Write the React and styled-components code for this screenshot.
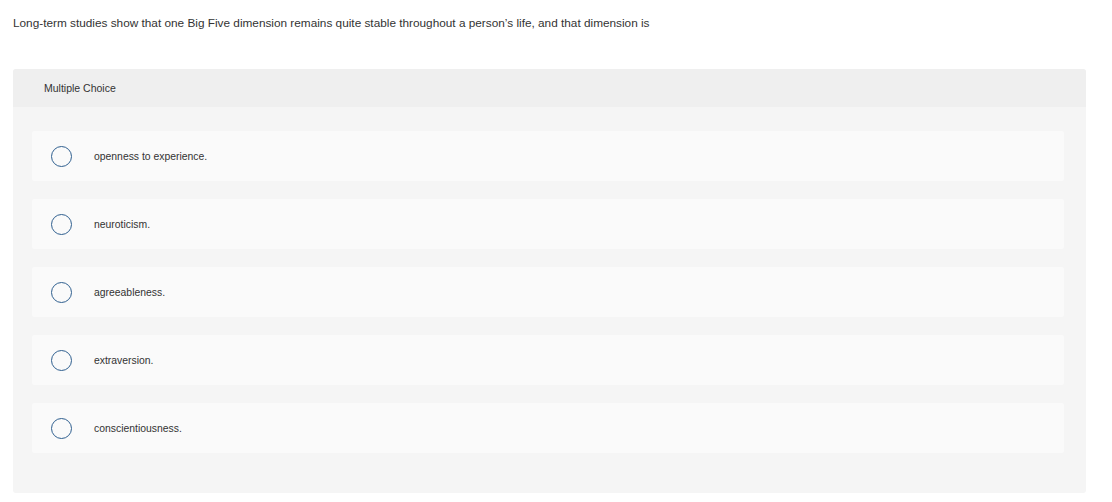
import React from 'react';
import styled, { createGlobalStyle } from 'styled-components';

const GlobalStyle = createGlobalStyle`
  body {
    margin: 0;
    background: #fff;
    font-family: "Liberation Sans", Arial, sans-serif;
    color: #333;
  }
`;

const choices = [
  'openness to experience.',
  'neuroticism.',
  'agreeableness.',
  'extraversion.',
  'conscientiousness.',
];

export default function App() {
  return (
    <>
      <GlobalStyle />
      <Page>
        <Question>
          Long-term studies show that one Big Five dimension remains quite stable throughout a person’s life, and that dimension is
        </Question>
        <Panel>
          <Header>Multiple Choice</Header>
          <Options>
            {choices.map(c => (
              <Option key={c}>
                <Radio />
                <Label>{c}</Label>
              </Option>
            ))}
          </Options>
        </Panel>
      </Page>
    </>
  );
}

const Page = styled.div`
  padding: 16px 26px 0 13px;
`;

const Question = styled.p`
  margin: 0;
  font-size: 11.8px;
  line-height: 14px;
  color: #333;
`;

const Panel = styled.div`
  margin-top: 39px;
  background: #f5f5f5;
  border-radius: 3px;
  padding-bottom: 40px;
`;

const Header = styled.div`
  height: 38px;
  background: #efefef;
  border-radius: 3px 3px 0 0;
  padding-left: 31px;
  display: flex;
  align-items: center;
  font-size: 10.5px;
  color: #333;
`;

const Options = styled.div`
  display: flex;
  flex-direction: column;
  gap: 18px;
  padding: 24px 22px 0 19px;
`;

const Option = styled.div`
  height: 50px;
  background: #fafafa;
  border-radius: 2px;
  display: flex;
  align-items: center;
  padding-left: 19px;
`;

const Radio = styled.span`
  width: 19px;
  height: 19px;
  border: 1.5px solid #2f5f8f;
  border-radius: 50%;
  flex: none;
`;

const Label = styled.span`
  margin-left: 22px;
  font-size: 10.4px;
  color: #333;
`;
